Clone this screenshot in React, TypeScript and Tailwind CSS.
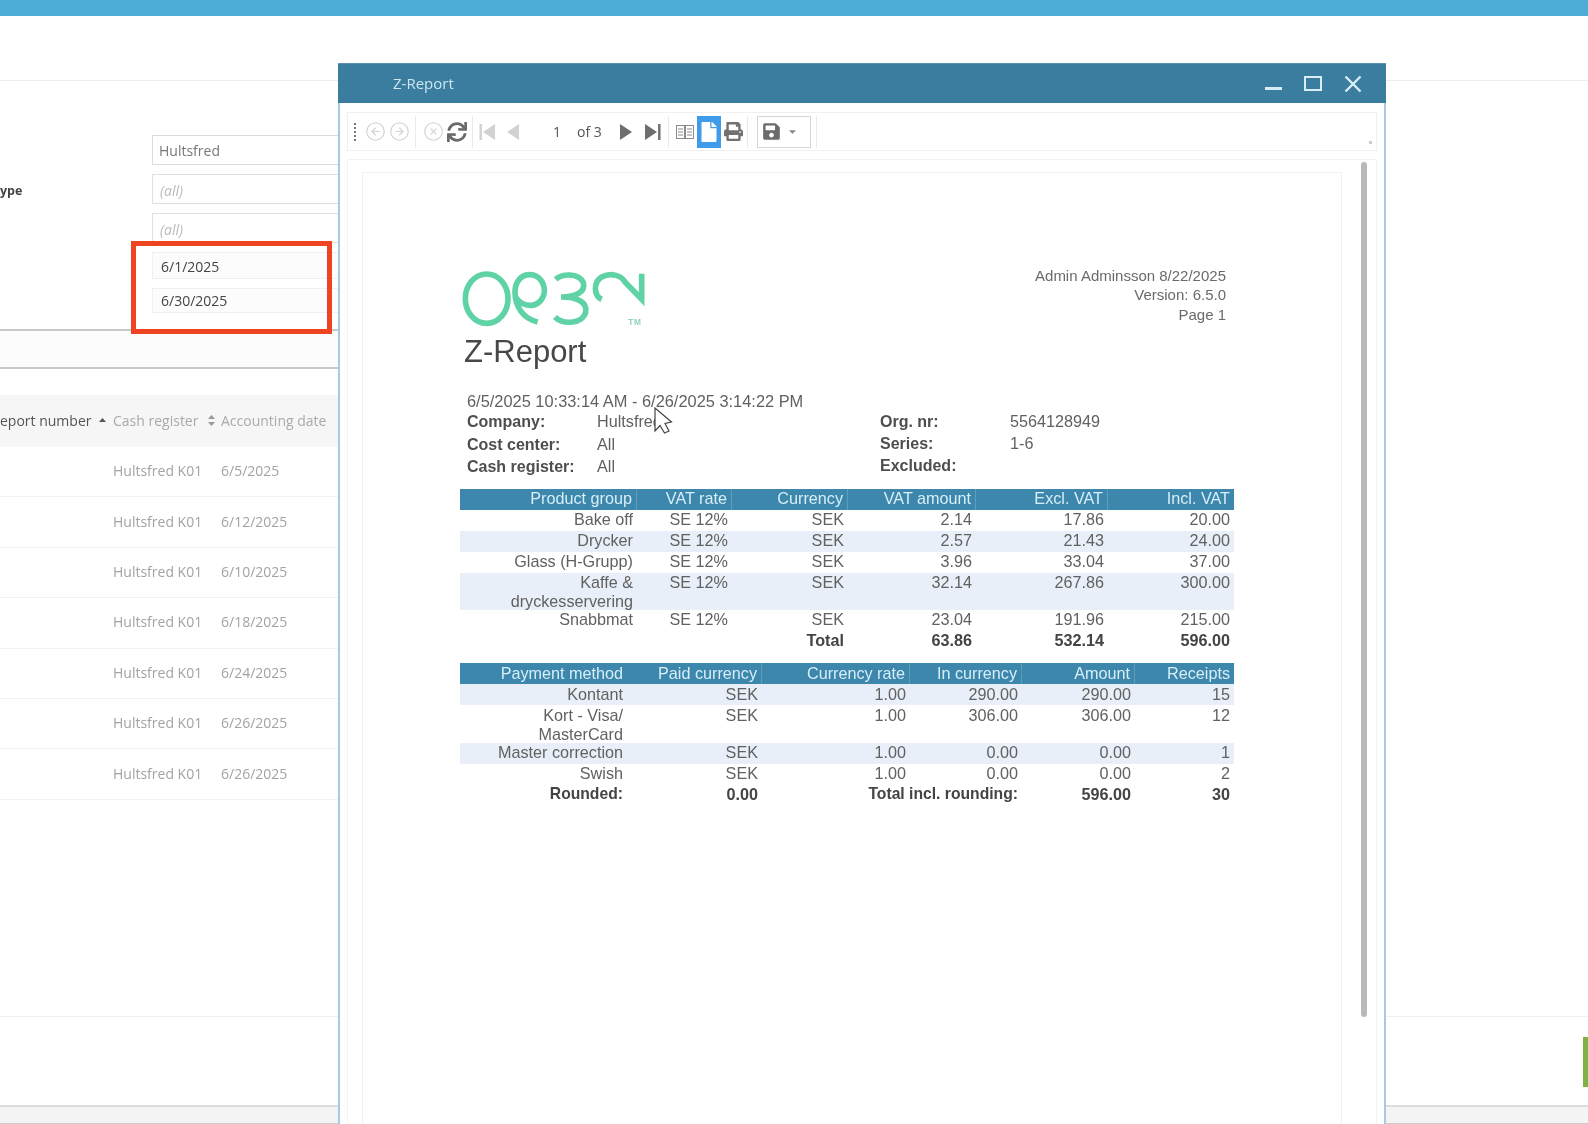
import React from 'react'
import { CircleArrowLeft, CircleArrowRight, CircleX } from 'lucide-react'
import { FaCaretDown, FaFile, FaPrint, FaSave, FaSync } from 'react-icons/fa'

const listRows = ['6/5/2025', '6/12/2025', '6/10/2025', '6/18/2025', '6/24/2025', '6/26/2025', '6/26/2025']

const productRows = [
    { h: 'h-[21px]', tint: false, cells: ['Bake off', 'SE 12%', 'SEK', '2.14', '17.86', '20.00'] },
    { h: 'h-[21px]', tint: true, cells: ['Drycker', 'SE 12%', 'SEK', '2.57', '21.43', '24.00'] },
    { h: 'h-[21px]', tint: false, cells: ['Glass (H-Grupp)', 'SE 12%', 'SEK', '3.96', '33.04', '37.00'] },
    { h: 'h-[37px]', tint: true, cells: ['Kaffe &\ndryckesservering', 'SE 12%', 'SEK', '32.14', '267.86', '300.00'] },
    { h: 'h-[20px]', tint: false, cells: ['Snabbmat', 'SE 12%', 'SEK', '23.04', '191.96', '215.00'] },
]

const paymentRows = [
    { h: 'h-[21px] pt-px', tint: true, cells: ['Kontant', 'SEK', '1.00', '290.00', '290.00', '15'] },
    { h: 'h-[38px] pt-px', tint: false, cells: ['Kort - Visa/\nMasterCard', 'SEK', '1.00', '306.00', '306.00', '12'] },
    { h: 'h-[21px]', tint: true, cells: ['Master correction', 'SEK', '1.00', '0.00', '0.00', '1'] },
    { h: 'h-[21px]', tint: false, cells: ['Swish', 'SEK', '1.00', '0.00', '0.00', '2'] },
]

const productCols = 'grid-cols-[177px_95px_116px_128px_132px_126px]'
const paymentCols = 'grid-cols-[167px_135px_148px_112px_113px_99px]'

const HeaderRow = ({ cols, cells, lead, firstPlain }: { cols: string; cells: string[]; lead: string; firstPlain?: boolean }) => (
    <div className={`grid ${cols} h-[21px] bg-[#3c87ab] text-[#d6eef8] ${lead}`}>
        {cells.map((c, i) => (
            <div key={i} className={`pr-[4px] text-right whitespace-nowrap ${i < cells.length - 1 && !(firstPlain && i === 0) ? 'border-r border-[#5f9dbc]' : ''}`}>{c}</div>
        ))}
    </div>
)

const BodyRow = ({ cols, h, tint, cells, bold }: { cols: string; h: string; tint?: boolean; cells: string[]; bold?: boolean }) => (
    <div className={`grid ${cols} ${h} leading-[18.5px] ${tint ? 'bg-[#e9eff8]' : ''} ${bold ? 'font-bold text-[#444444]' : 'text-[#616161]'}`}>
        {cells.map((c, i) => (
            <div key={i} className="pr-[4px] text-right whitespace-pre-line">{c}</div>
        ))}
    </div>
)

const Sep = ({ w }: { w: string }) => <div className={`${w} h-[32px] border-r border-[#eaeaea]`} />

const Tri = ({ dir, bar, color }: { dir: 'l' | 'r'; bar?: boolean; color: string }) => (
    <svg width="18" height="18" viewBox="0 0 18 18" fill={color}>
        {dir === 'l' ? <path d="M16 1 L16 17 L4 9 Z" /> : <path d="M2 1 L2 17 L14 9 Z" />}
        {bar && (dir === 'l' ? <rect x="0.5" y="1" width="2.4" height="16" /> : <rect x="15.1" y="1" width="2.4" height="16" />)}
    </svg>
)

const Logo = () => (
    <svg width="200" height="75" viewBox="0 0 600 225" fill="none" stroke="#5fd3a5" strokeWidth="17" className="-ml-[5px]">
        <ellipse cx="95" cy="110" rx="64" ry="74" />
        <path d="M248 180 C205 170 180 135 180 90 C180 60 198 38 224 38 C250 38 268 60 268 85 C268 110 250 130 226 130 C208 130 192 120 184 108" />
        <path d="M302 52 C320 36 370 30 385 62 C392 88 365 105 318 105 C365 105 398 120 392 150 C385 185 325 190 300 165" />
        <path d="M440 112 C415 100 415 60 440 45 C470 30 500 42 510 60 L560 112 L560 35" />
        <text x="520" y="189" fontSize="25" fontWeight="700" letterSpacing="2" fill="#8fd4b8" stroke="none" fontFamily="'Liberation Sans', sans-serif">TM</text>
    </svg>
)

const SortBoth = () => (
    <svg width="7" height="11" viewBox="0 0 7 11" fill="#999999">
        <path d="M3.5 0 L7 4 L0 4 Z M3.5 11 L7 7 L0 7 Z" />
    </svg>
)

function Background() {
    return (
        <div className="flex flex-col h-[1124px] bg-white font-['Open_Sans',sans-serif] text-[14px]">
            <div className="h-[16px] bg-[#4cacd6]" />
            <div className="h-[65px] border-b border-[#ececec]" />

            <div className="w-[420px]">
                {/* filter form */}
                <div className="h-[250px] pt-[54px] pl-[152px] border-b-2 border-[#c9c9c9] relative">
                    <div className="h-[30px] w-[260px] border border-[#dcdcdc] pl-[6px] leading-[29px] text-[#777777]">Hultsfred</div>
                    <div className="mt-[9px] h-[30px] w-[260px] border border-[#e0e0e0] pl-[7px] leading-[31px] italic text-[#bbbbbb]">(all)</div>
                    <div className="mt-[9px] h-[30px] w-[260px] border border-[#e0e0e0] pl-[7px] leading-[31px] italic text-[#bbbbbb]">(all)</div>
                    <div className="mt-[9px] h-[27px] w-[260px] border border-[#f0f0f0] bg-[#fcfcfc] pl-[8px] leading-[27px] text-[#444444]">6/1/2025</div>
                    <div className="mt-[9px] h-[25px] w-[260px] border border-[#f0f0f0] bg-[#fcfcfc] pl-[8px] leading-[24px] text-[#444444]">6/30/2025</div>
                    <div className="absolute left-0 top-[100px] font-bold text-[12.5px] leading-[20px] text-[#444444]">ype</div>
                </div>
                <div className="h-[38px] bg-[#fcfcfc] border-b-2 border-[#c9c9c9]" />

                {/* report list */}
                <div className="mt-[26px] h-[52px] bg-[#f6f6f6] grid grid-cols-[113px_108px_1fr] items-center overflow-hidden pb-[2px]">
                    <div className="flex items-center justify-between pr-[7px] text-[#555555]">
                        <span className="font-medium whitespace-nowrap">eport number</span>
                        <svg width="7" height="4" viewBox="0 0 7 4" fill="#555555"><path d="M3.5 0 L7 4 L0 4 Z" /></svg>
                    </div>
                    <div className="flex items-center justify-between pr-[6px] text-[#aaaaaa]">
                        <span className="whitespace-nowrap">Cash register</span>
                        <SortBoth />
                    </div>
                    <div className="text-[#aaaaaa] whitespace-nowrap">Accounting date</div>
                </div>
                {listRows.map((d, i) => (
                    <div key={i} className="h-[50.4px] pb-[2px] grid grid-cols-[113px_108px_1fr] items-center border-b border-[#f2f2f2] text-[#a3a3a3]">
                        <div />
                        <div className="whitespace-nowrap">Hultsfred K01</div>
                        <div>{d}</div>
                    </div>
                ))}
            </div>

            <div className="flex-1 border-b border-[#f0f0f0]" />
            <div className="h-[88px] pt-[20px] flex justify-end">
                <div className="w-[5px] h-[50px] bg-[#7cb342]" />
            </div>
            <div className="h-[19px] bg-[#f4f4f4] border-t-2 border-t-[#dddddd] border-b border-b-[#cccccc]" />
        </div>
    )
}

function Toolbar() {
    return (
        <div className="mx-[7px] mt-[9px] h-[39px] border border-[#f0f0f0] flex items-center relative font-['Open_Sans',sans-serif] text-[14px] text-[#555555]">
            <div className="w-[14px] flex flex-col items-center gap-[2px]">
                <div className="w-[2px] h-[2px] bg-[#777777]" />
                <div className="w-[2px] h-[2px] bg-[#777777]" />
                <div className="w-[2px] h-[2px] bg-[#777777]" />
                <div className="w-[2px] h-[2px] bg-[#777777]" />
                <div className="w-[2px] h-[2px] bg-[#777777]" />
            </div>
            <div className="ml-px w-[24px] flex justify-center"><CircleArrowLeft size={21} strokeWidth={1.3} color="#d2d2d2" /></div>
            <div className="w-[24px] flex justify-center"><CircleArrowRight size={21} strokeWidth={1.3} color="#d2d2d2" /></div>
            <Sep w="w-[5px]" />
            <div className="ml-[3px] w-[28px] flex justify-center"><CircleX size={21} strokeWidth={1.3} color="#d2d2d2" /></div>
            <div className="w-[20px] flex justify-center"><FaSync size={20} color="#6a6a6a" /></div>
            <Sep w="w-[6px]" />
            <div className="w-[30px] flex justify-center"><Tri dir="l" bar color="#d2d2d2" /></div>
            <div className="w-[18px] flex justify-center"><Tri dir="l" color="#d2d2d2" /></div>
            <div className="w-[40px] text-right">1</div>
            <div className="ml-[16px] w-[28px] whitespace-nowrap">of 3</div>
            <div className="ml-[6px] w-[32px] flex justify-center"><Tri dir="r" color="#6e6e6e" /></div>
            <div className="w-[18px] flex justify-center"><Tri dir="r" bar color="#6e6e6e" /></div>
            <Sep w="w-[8px]" />
            <div className="ml-[7px] w-[17px]">
                <svg width="18" height="14" viewBox="0 0 18 14" fill="none" stroke="#8a8a8a" strokeWidth="1">
                    <rect x="0.5" y="0.5" width="8" height="13" />
                    <rect x="9.5" y="0.5" width="8" height="13" />
                    <path d="M2 4h5M2 7h5M2 10h5M11 4h5M11 7h5M11 10h5" />
                </svg>
            </div>
            <div className="ml-[4px] w-[24px] h-[32px] bg-[#3f9cea] flex items-center justify-center"><FaFile size={20} color="#ffffff" /></div>
            <div className="w-[24px] flex justify-center"><FaPrint size={19} color="#727272" /></div>
            <Sep w="w-[3px]" />
            <div className="ml-[9px] w-[54px] h-[32px] border border-[#d6d6d6] flex items-center pl-[4px] gap-[6px]">
                <FaSave size={19} color="#6a6a6a" />
                <FaCaretDown size={11} color="#888888" />
            </div>
            <Sep w="w-[6px]" />
            <div className="absolute right-[4px] bottom-[6px] w-[3px] h-[3px] bg-[#cccccc]" />
        </div>
    )
}

const Fact = ({ label, value }: { label: string; value: string }) => (
    <div className="grid grid-cols-[130px_1fr] items-baseline h-full">
        <div className="font-bold text-[16px] text-[#4e4e4e]">{label}</div>
        <div>{value}</div>
    </div>
)

function ReportPage() {
    return (
        <div className="mt-[12px] w-[980px] h-[1000px] border border-[#f0f0f0] pl-[97px] pt-[89px] font-['Liberation_Sans',Arial,sans-serif] text-[16.2px] text-[#616161]">
            <div className="w-[774px]">
                <div className="flex justify-between h-[72px]">
                    <Logo />
                    <div className="pt-[4px] pr-[8px] text-right text-[15px] leading-[19.3px] text-[#6a6a6a]">
                        <div>Admin Adminsson 8/22/2025</div>
                        <div>Version: 6.5.0</div>
                        <div>Page 1</div>
                    </div>
                </div>
                <div className="ml-[4px] h-[36px] text-[31px] leading-[36px] text-[#484848]">Z-Report</div>
                <div className="mt-[21px] ml-[7px] h-[20px] text-[16.4px] leading-[20px] whitespace-nowrap">6/5/2025 10:33:14 AM - 6/26/2025 3:14:22 PM</div>
                <div className="ml-[7px] flex h-[68px] leading-[20px]">
                    <div className="w-[413px] grid auto-rows-[22.5px]">
                        <Fact label="Company:" value="Hultsfred" />
                        <Fact label="Cost center:" value="All" />
                        <Fact label="Cash register:" value="All" />
                    </div>
                    <div className="flex-1 grid auto-rows-[22px]">
                        <Fact label="Org. nr:" value="5564128949" />
                        <Fact label="Series:" value="1-6" />
                        <Fact label="Excluded:" value={'\u00a0'} />
                    </div>
                </div>

                <div className="mt-[10px]">
                    <HeaderRow cols={productCols} lead="leading-[18px]" cells={['Product group', 'VAT rate', 'Currency', 'VAT amount', 'Excl. VAT', 'Incl. VAT']} />
                    {productRows.map((r, i) => <BodyRow key={i} cols={productCols} {...r} />)}
                    <BodyRow cols={productCols} h="h-[22px] pt-px" bold cells={['', '', 'Total', '63.86', '532.14', '596.00']} />
                </div>

                <div className="mt-[11px]">
                    <HeaderRow cols={paymentCols} lead="leading-[20px]" firstPlain cells={['Payment method', 'Paid currency', 'Currency rate', 'In currency', 'Amount', 'Receipts']} />
                    {paymentRows.map((r, i) => <BodyRow key={i} cols={paymentCols} {...r} />)}
                    <div className={`grid ${paymentCols} h-[21px] leading-[18.5px] font-bold text-[#444444]`}>
                        <div className="pr-[4px] text-right text-[15.7px]">Rounded:</div>
                        <div className="pr-[4px] text-right">0.00</div>
                        <div className="col-span-2 pr-[4px] text-right text-[15.7px]">Total incl. rounding:</div>
                        <div className="pr-[4px] text-right">596.00</div>
                        <div className="pr-[4px] text-right">30</div>
                    </div>
                </div>
            </div>
        </div>
    )
}

function ReportWindow() {
    return (
        <div className="absolute left-[338px] top-[63px] w-[1048px] h-[1061px] bg-white overflow-hidden flex flex-col">
            {/* title bar */}
            <div className="h-[40px] shrink-0 bg-[#3b7d9f] border-t border-[#5b93b3] flex items-center pl-[55px] font-['Open_Sans',sans-serif] text-[15px] text-[#cde6f2]">
                <span>Z-Report</span>
                <div className="ml-auto flex items-center">
                    <div className="w-[17px] h-[2.5px] mt-[10px] bg-[#d8eef6]" />
                    <div className="ml-[22px] w-[18px] h-[15px] border-[2.5px] border-[#d8eef6]" />
                    <svg className="ml-[22px] mr-[24px]" width="18" height="18" viewBox="0 0 18 18" stroke="#d8eef6" strokeWidth="2.4">
                        <path d="M1.5 1.5 L16.5 16.5 M16.5 1.5 L1.5 16.5" />
                    </svg>
                </div>
            </div>
            <div className="flex-1 border-x-2 border-[#a9c8e4] overflow-hidden">
                <Toolbar />
                <div className="mx-[7px] mt-[8px] h-[1000px] border border-[#f2f2f2] pl-[14px] flex items-start">
                    <ReportPage />
                    <div className="ml-[19px] mt-[2px] w-[6px] h-[855px] rounded-full bg-[#b9b9b9]" />
                </div>
            </div>
        </div>
    )
}

export default function App() {
    return (
        <div className="relative w-[1588px] h-[1124px] overflow-hidden blur-[0.6px]">
            <Background />
            <ReportWindow />
            {/* red highlight around the date fields */}
            <div className="absolute left-[131px] top-[241px] w-[201px] h-[93px] border-[5px] border-[#ee4422]" />
            {/* mouse pointer */}
            <svg className="absolute left-[654px] top-[407px]" width="19" height="28" viewBox="0 0 19 28" fill="#ffffff" stroke="#444444" strokeWidth="1.2">
                <path d="M1 1 L1 24 L6 18.5 L10.5 26 L15 24 L11 16.5 L17.5 15 Z" />
            </svg>
        </div>
    )
}
